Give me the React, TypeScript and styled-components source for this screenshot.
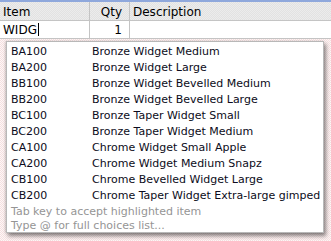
import React from 'react';
import styled, { createGlobalStyle } from 'styled-components';

const GlobalStyle = createGlobalStyle`
  html, body {
    margin: 0;
    padding: 0;
    background: #fff;
  }
  body {
    font-family: "DejaVu Sans", "Liberation Sans", sans-serif;
    font-size: 11px;
  }
`;

const choices = [
  ['BA100', 'Bronze Widget Medium'],
  ['BA200', 'Bronze Widget Large'],
  ['BB100', 'Bronze Widget Bevelled Medium'],
  ['BB200', 'Bronze Widget Bevelled Large'],
  ['BC100', 'Bronze Taper Widget Small'],
  ['BC200', 'Bronze Taper Widget Medium'],
  ['CA100', 'Chrome Widget Small Apple'],
  ['CA200', 'Chrome Widget Medium Snapz'],
  ['CB100', 'Chrome Bevelled Widget Large'],
  ['CB200', 'Chrome Taper Widget Extra-large gimped'],
];

const Page = styled.div`
  width: 331px;
  height: 241px;
  overflow: hidden;
  display: flex;
  flex-direction: column;
  border-top: 2px solid #8fa8dc;
  box-sizing: border-box;
`;

const Row = styled.div<{ header?: boolean }>`
  display: grid;
  grid-template-columns: 90px 40px 1fr;
  height: ${p => (p.header ? '18px' : '17px')};
  background: ${p =>
    p.header
      ? 'repeating-conic-gradient(#e2e2e2 0 25%, #ececec 0 50%) 0 0 / 2px 2px'
      : '#fff'};
  border-bottom: 1px solid #c4c4c4;
  flex-shrink: 0;
`;

const Cell = styled.div<{ right?: boolean; last?: boolean; low?: boolean }>`
  display: flex;
  align-items: ${p => (p.low ? 'flex-end' : 'center')};
  justify-content: ${p => (p.right ? 'flex-end' : 'flex-start')};
  padding: 0 ${p => (p.right ? '7px' : '2px')} ${p => (p.low ? '1px' : '0')} ${p => (p.right ? '2px' : '3px')};
  border-right: ${p => (p.last ? 'none' : '1px solid #c4c4c4')};
  color: #000;
  font-size: 12px;
  white-space: nowrap;
`;

const Caret = styled.span`
  display: inline-block;
  width: 1px;
  height: 13px;
  background: #000;
  margin-left: 1px;
`;

const Body = styled.div`
  flex: 1;
  padding: 2px 8px 0 6px;
  background: repeating-conic-gradient(#f6e0e0 0 25%, #fdf7f7 0 50%) 0 0 / 2px 2px;
`;

const Popup = styled.div`
  background: #fff;
  border: 1px solid #b8b8b8;
  box-shadow: 2px 3px 4px rgba(0, 0, 0, 0.45), -1px 0 2px rgba(0, 0, 0, 0.15);
  width: 316px;
  height: 189px;
  padding-top: 1px;
  box-sizing: content-box;
`;

const Choice = styled.div`
  display: grid;
  grid-template-columns: 81px 1fr;
  height: 16px;
  align-items: center;
  padding-left: 4px;
  color: #0c0c20;
  font-size: 11px;
  white-space: nowrap;
`;

const Hints = styled.div`
  padding: 2px 0 0 4px;
  color: #959595;
  font-size: 11px;
  line-height: 14px;
`;

export default function App() {
  return (
    <>
      <GlobalStyle />
      <Page>
        <Row header>
          <Cell low>Item</Cell>
          <Cell low right>Qty</Cell>
          <Cell low last>Description</Cell>
        </Row>
        <Row>
          <Cell>
            WIDG
            <Caret />
          </Cell>
          <Cell right>1</Cell>
          <Cell last />
        </Row>
        <Body>
          <Popup>
            {choices.map(([code, desc]) => (
              <Choice key={code}>
                <span>{code}</span>
                <span>{desc}</span>
              </Choice>
            ))}
            <Hints>
              <div>Tab key to accept highlighted item</div>
              <div>Type @ for full choices list...</div>
            </Hints>
          </Popup>
        </Body>
      </Page>
    </>
  );
}
